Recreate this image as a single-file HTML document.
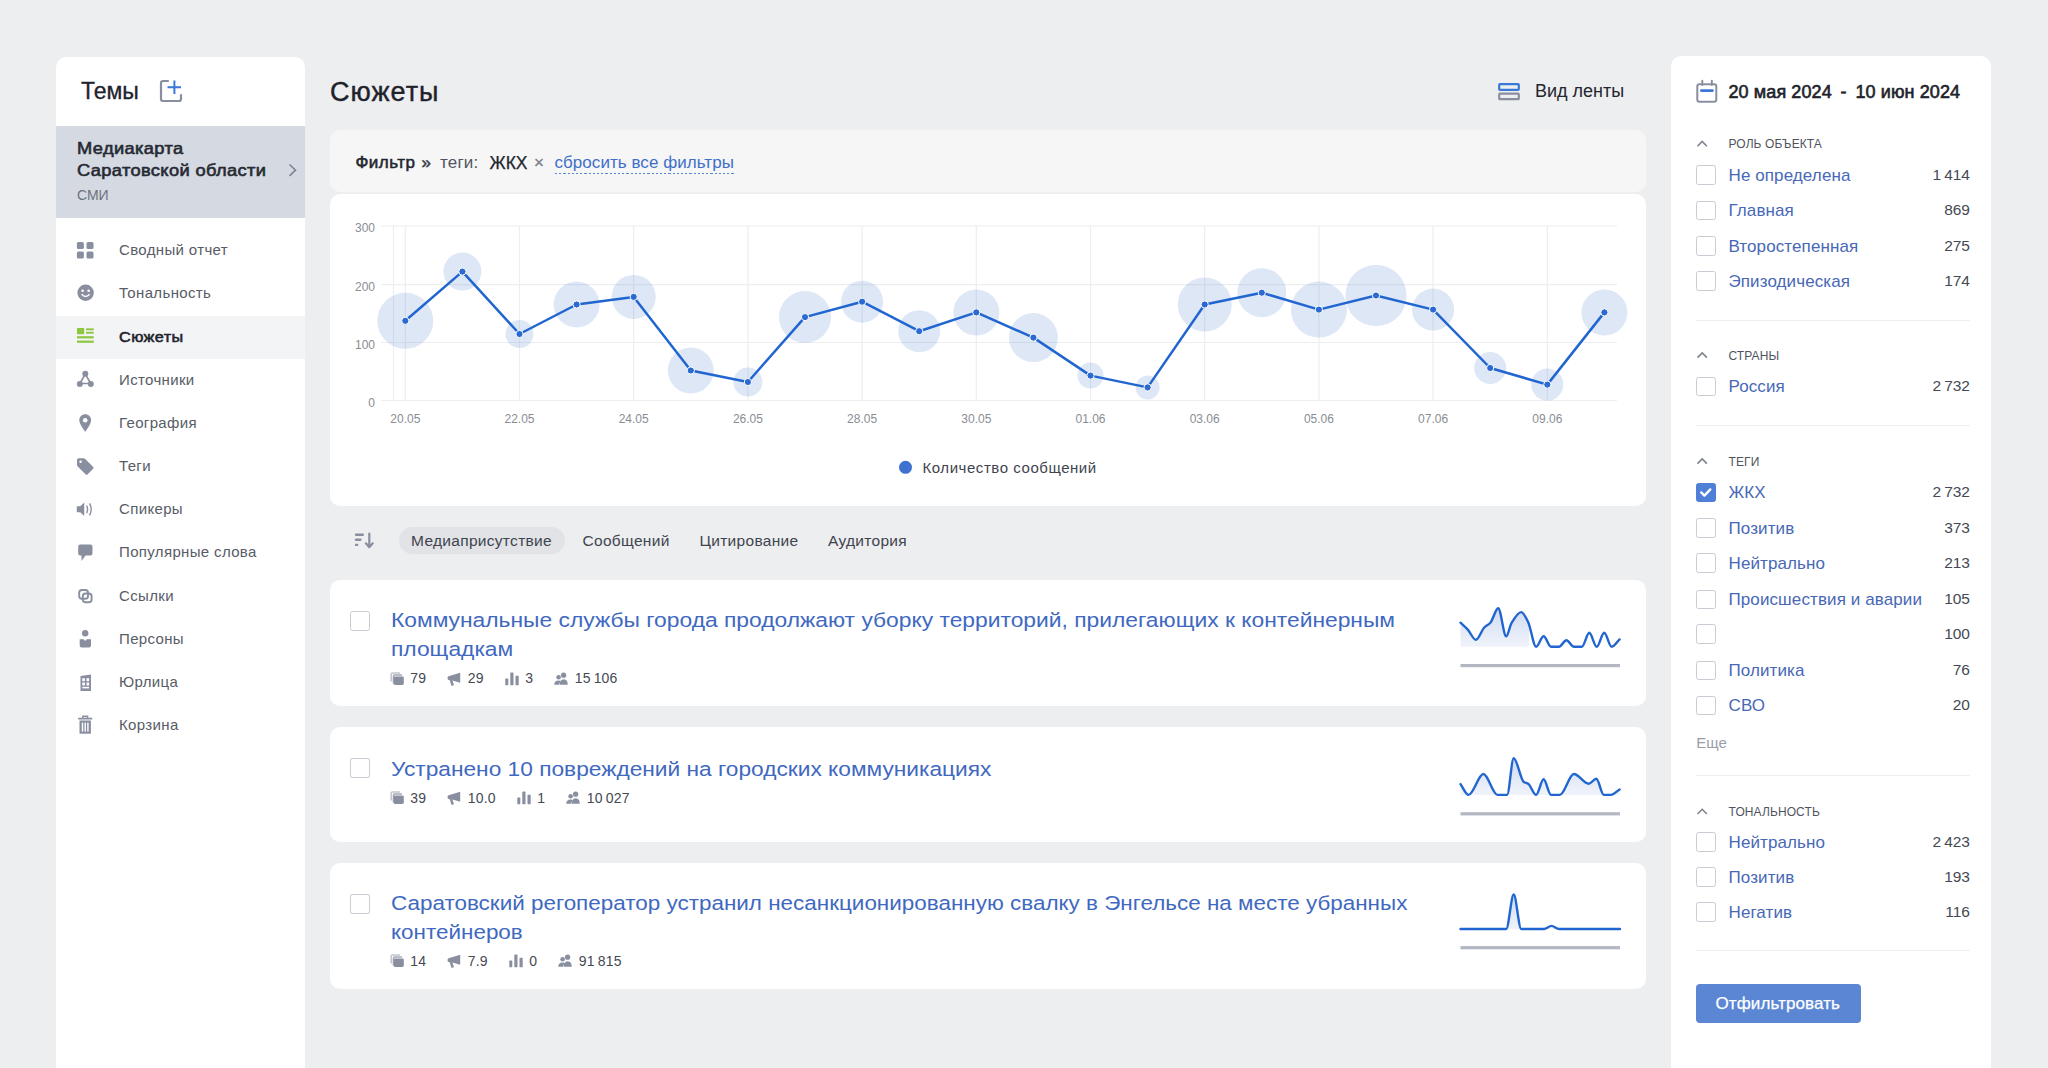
<!DOCTYPE html>
<html><head><meta charset="utf-8">
<style>
*{box-sizing:border-box;margin:0;padding:0}
html,body{width:2048px;height:1068px;overflow:hidden;background:#EDEEF0;font-family:"Liberation Sans",sans-serif;color:#23262E}
.a{position:absolute;white-space:nowrap;line-height:1}
.panel{position:absolute;background:#fff}
.yl{left:335px;width:40px;text-align:right;font-size:12px;color:#8A8D94}
.xl{top:413px;width:60px;text-align:center;font-size:12px;color:#8A8D94}
.tab{top:532.9px;font-size:15.5px;color:#40444E;letter-spacing:0.3px}
.cb{width:19.5px;height:19.5px;border:1.8px solid #C9CCD3;border-radius:2.5px;background:#fff}
.ct{font-size:20.5px;line-height:29px;color:#3F69C0;letter-spacing:0px;transform-origin:0 0;transform:scaleX(1.113)}
.met{font-size:14px;color:#454953;display:flex;align-items:center;height:14px;letter-spacing:0.2px}
.met .mic{flex:none;margin-right:6.5px;top:0.5px}
.met .mv{margin-right:21px;line-height:14px}
.sh{margin-top:1px;left:1728.5px;font-size:12px;color:#50545E;letter-spacing:0.1px}
.rl{left:1728.5px;font-size:17px;color:#4868B6;letter-spacing:0.1px}
.rc{right:78px;font-size:15.5px;color:#454953;text-align:right}
.cb.on{background:#4F7FD6;border-color:#4F7FD6}
.dt{top:82.8px;font-size:18px;color:#1E222B;letter-spacing:0.1px;-webkit-text-stroke:0.6px #1E222B}
.mi{left:119px;font-size:15px;color:#585C66;letter-spacing:0.35px}
.mi.sel{color:#1E222B;-webkit-text-stroke:0.55px #1E222B;letter-spacing:0.4px;transform-origin:0 0;transform:scaleX(1.08)}
.sg{left:77px;font-size:16.5px;color:#262A33;-webkit-text-stroke:0.6px #262A33;letter-spacing:0.35px;transform-origin:0 0;transform:scaleX(1.105)}
svg{position:absolute;overflow:visible}
</style></head><body>

<!-- LEFT SIDEBAR -->
<div class="panel" style="left:56px;top:57px;width:249px;height:1020px;border-radius:10px 10px 0 0"></div>
<div class="a" style="left:81px;top:80.2px;font-size:23px;color:#1E222B;-webkit-text-stroke:0.3px #1E222B">Темы</div>
<div class="a" id="sel" style="left:56px;top:126px;width:249px;height:92px;background:#D5D9E1;position:absolute"></div>
<div class="a sg" style="top:140px">Медиакарта</div>
<div class="a sg" style="top:162px">Саратовской области</div>
<div class="a" style="left:77px;top:188px;font-size:14px;color:#6C717C">СМИ</div>
<div class="a" style="left:56px;top:316px;width:249px;height:43px;background:#F3F4F6"></div>
<div class="a mi" style="top:242.1px">Сводный отчет</div>
<div class="a mi" style="top:285.3px">Тональность</div>
<div class="a mi sel" style="top:328.5px">Сюжеты</div>
<div class="a mi" style="top:371.6px">Источники</div>
<div class="a mi" style="top:414.8px">География</div>
<div class="a mi" style="top:458.0px">Теги</div>
<div class="a mi" style="top:501.2px">Спикеры</div>
<div class="a mi" style="top:544.4px">Популярные слова</div>
<div class="a mi" style="top:587.5px">Ссылки</div>
<div class="a mi" style="top:630.7px">Персоны</div>
<div class="a mi" style="top:673.9px">Юрлица</div>
<div class="a mi" style="top:717.1px">Корзина</div>
<svg style="left:0;top:0" width="2048" height="1068">
<g fill="#8A8FA0">
<!-- plus icon -->
<path d="M168 81 H163 Q161 81 161 83 V99 Q161 101 163 101 H179 Q181 101 181 99 V95" fill="none" stroke="#8A8FA0" stroke-width="2.2" stroke-linecap="round"/>
<path d="M174.4 80.5 V94 M167.5 87.2 H181" stroke="#3A78D8" stroke-width="2" fill="none"/>
<!-- chevron -->
<path d="M289.5 164.5 L295.5 170.2 L289.5 175.8" fill="none" stroke="#7E838F" stroke-width="1.6"/>
<!-- grid -->
<rect x="76.9" y="241.9" width="7" height="7" rx="1.5"/><rect x="86.5" y="241.9" width="7" height="7" rx="1.5"/>
<rect x="76.9" y="251.5" width="7" height="7" rx="1.5"/><rect x="86.5" y="251.5" width="7" height="7" rx="1.5"/>
<!-- smiley -->
<circle cx="85.6" cy="292.8" r="8.2"/>
<circle cx="82.6" cy="290.8" r="1.3" fill="#fff"/><circle cx="88.6" cy="290.8" r="1.3" fill="#fff"/>
<path d="M81.6 294.3 Q85.6 298.5 89.6 294.3" fill="none" stroke="#fff" stroke-width="1.5"/>
<!-- sources -->
<path d="M85.3 374 L79.8 383.5 L90.8 383.5 Z" fill="none" stroke="#8A8FA0" stroke-width="1.6"/>
<circle cx="85.3" cy="373.8" r="3"/><circle cx="79.8" cy="384" r="3"/><circle cx="90.8" cy="384" r="3"/>
<!-- pin -->
<path d="M85.2 414.3 C81.8 414.3 79.3 416.8 79.3 420.2 C79.3 424.2 85.2 431.7 85.2 431.7 C85.2 431.7 91.1 424.2 91.1 420.2 C91.1 416.8 88.6 414.3 85.2 414.3Z"/>
<circle cx="85.2" cy="420.2" r="2.3" fill="#fff"/>
<!-- tag -->
<path d="M77 460 V464.8 Q77 465.8 77.7 466.5 L85.5 474.2 Q86.6 475.3 87.7 474.2 L93 468.9 Q94.1 467.8 93 466.7 L85.2 458.9 Q84.5 458.2 83.5 458.2 H78.8 Q77 458.2 77 460Z"/>
<circle cx="80.6" cy="461.7" r="1.3" fill="#fff"/>
<!-- speaker -->
<path d="M76.8 506.3 H80.2 L84.2 502.6 V516 L80.2 512.3 H76.8Z"/>
<path d="M86.6 505.5 Q88.6 509.3 86.6 513.1 M89.6 503.3 Q92.8 509.3 89.6 515.3" fill="none" stroke="#8A8FA0" stroke-width="1.4"/>
<!-- chat -->
<path d="M80.2 544.4 H90.5 Q92.5 544.4 92.5 546.4 V553.6 Q92.5 555.6 90.5 555.6 H85.5 L81.5 561 V555.6 H80.2 Q78.2 555.6 78.2 553.6 V546.4 Q78.2 544.4 80.2 544.4Z"/>
<!-- links -->
<rect x="79.2" y="590" width="8.8" height="8.8" rx="2.8" fill="none" stroke="#8A8FA0" stroke-width="1.9"/>
<rect x="82.8" y="593.5" width="8.8" height="8.8" rx="2.8" fill="none" stroke="#8A8FA0" stroke-width="1.9"/>
<!-- person -->
<circle cx="85.2" cy="633.2" r="3.2"/>
<path d="M79.7 639.2 H83.7 L85.2 641 L86.7 639.2 H91 V645.5 Q91 647.6 89 647.6 H81.7 Q79.7 647.6 79.7 645.5Z"/>
<!-- building -->
<path d="M80.5 676 L91 674.5 V691 H80.5Z"/>
<rect x="82.3" y="678.2" width="2.6" height="3" fill="#fff"/><rect x="86.5" y="678.2" width="2.6" height="3" fill="#fff"/>
<rect x="82.3" y="682.5" width="2.6" height="3" fill="#fff"/><rect x="86.5" y="682.5" width="2.6" height="3" fill="#fff"/>
<rect x="82.3" y="686.8" width="6.8" height="1.6" fill="#fff"/>
<!-- trash -->
<path d="M78.2 718.6 H92.2" stroke="#8A8FA0" stroke-width="1.8"/>
<path d="M82.8 718 V716.2 H87.6 V718" fill="none" stroke="#8A8FA0" stroke-width="1.4"/>
<path d="M79.5 720.5 H90.9 V733.7 H79.5Z"/>
<rect x="81.8" y="722.6" width="1.4" height="9" fill="#fff"/><rect x="84.5" y="722.6" width="1.4" height="9" fill="#fff"/><rect x="87.2" y="722.6" width="1.4" height="9" fill="#fff"/>
</g>
<!-- stories green -->
<g fill="#8DC63F">
<rect x="77" y="328" width="7.2" height="6.2" rx="0.6"/>
<rect x="86" y="328.4" width="7.7" height="1.9"/><rect x="86" y="331.8" width="7.7" height="1.9"/>
<rect x="77" y="336.2" width="16.7" height="2.2"/><rect x="77" y="340.6" width="16.7" height="2.2"/>
</g>
</svg>


<!-- MAIN -->
<div class="a" style="left:330px;top:78.6px;font-size:27px;color:#1E222B;letter-spacing:1px;-webkit-text-stroke:0.4px #1E222B">Сюжеты</div>
<div class="a" style="left:1535px;top:82px;font-size:18px;color:#23262E">Вид ленты</div>

<div class="panel" style="left:330px;top:130px;width:1316px;height:62px;border-radius:10px;background:#F6F6F7"></div>
<div class="panel" style="left:330px;top:194px;width:1316px;height:312px;border-radius:10px"></div>

<div class="a" style="left:399px;top:527px;width:166px;height:27px;border-radius:14px;background:#E1E3E7"></div>


<!-- view icon -->
<svg style="left:0;top:0" width="2048" height="1068">
<rect x="1499.2" y="84.2" width="19.6" height="5.6" rx="0.8" fill="none" stroke="#3A78D8" stroke-width="2.2"/>
<rect x="1499.2" y="93.6" width="19.6" height="5.6" rx="0.8" fill="none" stroke="#8A8FA0" stroke-width="2.2"/>
<g stroke="#EDEEF1" stroke-width="1.2" fill="none">
<path d="M381 226 H1617"/>
<path d="M381 284.7 H1617"/>
<path d="M381 342.5 H1617"/>
<path d="M381 400.5 H1617"/>
<path d="M393.5 226 V400.5"/>
<path d="M405.3 226 V400.5"/>
<path d="M519.5 226 V400.5"/>
<path d="M633.7 226 V400.5"/>
<path d="M747.9 226 V400.5"/>
<path d="M862.1 226 V400.5"/>
<path d="M976.3 226 V400.5"/>
<path d="M1090.5 226 V400.5"/>
<path d="M1204.7 226 V400.5"/>
<path d="M1318.9 226 V400.5"/>
<path d="M1433.1 226 V400.5"/>
<path d="M1547.3 226 V400.5"/>
</g>
<g fill="#3C6FC8" fill-opacity="0.17">
<circle cx="405.3" cy="320.8" r="28"/>
<circle cx="462.4" cy="271.6" r="19"/>
<circle cx="519.5" cy="334" r="14"/>
<circle cx="576.6" cy="304.5" r="23"/>
<circle cx="633.7" cy="296.9" r="22"/>
<circle cx="690.8" cy="370.5" r="23"/>
<circle cx="747.9" cy="382" r="14.5"/>
<circle cx="805.0" cy="317.1" r="26"/>
<circle cx="862.1" cy="301.7" r="21"/>
<circle cx="919.2" cy="331.2" r="21"/>
<circle cx="976.3" cy="312.4" r="23"/>
<circle cx="1033.4" cy="337.6" r="24.5"/>
<circle cx="1090.5" cy="375.6" r="13"/>
<circle cx="1147.6" cy="387.4" r="12"/>
<circle cx="1204.7" cy="304.5" r="27"/>
<circle cx="1261.8" cy="292.7" r="24.5"/>
<circle cx="1318.9" cy="309.6" r="28"/>
<circle cx="1376.0" cy="295.5" r="30.6"/>
<circle cx="1433.1" cy="309.6" r="21"/>
<circle cx="1490.2" cy="368" r="16"/>
<circle cx="1547.3" cy="384.6" r="16"/>
<circle cx="1604.4" cy="312.4" r="23"/>
</g>
<path d="M405.3 320.8 L462.4 271.6 L519.5 334 L576.6 304.5 L633.7 296.9 L690.8 370.5 L747.9 382 L805.0 317.1 L862.1 301.7 L919.2 331.2 L976.3 312.4 L1033.4 337.6 L1090.5 375.6 L1147.6 387.4 L1204.7 304.5 L1261.8 292.7 L1318.9 309.6 L1376.0 295.5 L1433.1 309.6 L1490.2 368 L1547.3 384.6 L1604.4 312.4" fill="none" stroke="#2166D0" stroke-width="2.5" stroke-linejoin="round"/>
<g fill="#2A6AD2" stroke="#fff" stroke-width="1">
<circle cx="405.3" cy="320.8" r="3.6"/>
<circle cx="462.4" cy="271.6" r="3.6"/>
<circle cx="519.5" cy="334" r="3.6"/>
<circle cx="576.6" cy="304.5" r="3.6"/>
<circle cx="633.7" cy="296.9" r="3.6"/>
<circle cx="690.8" cy="370.5" r="3.6"/>
<circle cx="747.9" cy="382" r="3.6"/>
<circle cx="805.0" cy="317.1" r="3.6"/>
<circle cx="862.1" cy="301.7" r="3.6"/>
<circle cx="919.2" cy="331.2" r="3.6"/>
<circle cx="976.3" cy="312.4" r="3.6"/>
<circle cx="1033.4" cy="337.6" r="3.6"/>
<circle cx="1090.5" cy="375.6" r="3.6"/>
<circle cx="1147.6" cy="387.4" r="3.6"/>
<circle cx="1204.7" cy="304.5" r="3.6"/>
<circle cx="1261.8" cy="292.7" r="3.6"/>
<circle cx="1318.9" cy="309.6" r="3.6"/>
<circle cx="1376.0" cy="295.5" r="3.6"/>
<circle cx="1433.1" cy="309.6" r="3.6"/>
<circle cx="1490.2" cy="368" r="3.6"/>
<circle cx="1547.3" cy="384.6" r="3.6"/>
<circle cx="1604.4" cy="312.4" r="3.6"/>
</g>
<circle cx="905.5" cy="467.3" r="6.5" fill="#3F72D0"/>
<!-- sort icon -->
<g fill="#8A8FA0">
<rect x="354.8" y="533.6" width="9.2" height="2.3" rx="1.1"/>
<rect x="354.8" y="538.6" width="6.8" height="2.3" rx="1.1"/>
<rect x="354.8" y="543.8" width="3.6" height="2.3" rx="1.1"/>
</g>
<path d="M369.3 533.5 V547 M365.9 543.3 L369.3 547.2 L372.7 543.3" fill="none" stroke="#8A8FA0" stroke-width="2.2" stroke-linecap="round" stroke-linejoin="round"/>
</svg>

<!-- filter bar -->
<div class="a" style="left:355.5px;top:153.6px;font-size:17px;color:#23262E;letter-spacing:0.45px;-webkit-text-stroke:0.55px #23262E">Фильтр</div>
<div class="a" style="left:421.5px;top:153.6px;font-size:17px;color:#3A3E48;-webkit-text-stroke:0.55px #3A3E48">»</div>
<div class="a" style="left:440px;top:153.6px;font-size:17px;color:#50545E;letter-spacing:0.2px">теги:</div>
<div class="a" style="left:489.5px;top:154.6px;font-size:17.5px;color:#23262E;-webkit-text-stroke:0.25px #23262E">ЖКХ</div>
<div class="a" style="left:534px;top:153.6px;font-size:17px;color:#7E828C;-webkit-text-stroke:0.4px #7E828C">×</div>
<div class="a" style="left:554.5px;top:153.6px;font-size:17px;color:#3F6FC8;letter-spacing:0.05px;padding-bottom:3.5px;background:repeating-linear-gradient(90deg,#5A86D6 0 2.2px,transparent 2.2px 4.2px) left bottom/100% 1.4px no-repeat;line-height:17px">сбросить все фильтры</div>

<!-- chart labels -->
<div class="a yl" style="top:222.4px">300</div>
<div class="a yl" style="top:281.1px">200</div>
<div class="a yl" style="top:338.9px">100</div>
<div class="a yl" style="top:396.9px">0</div>
<div class="a xl" style="left:375.3px">20.05</div>
<div class="a xl" style="left:489.5px">22.05</div>
<div class="a xl" style="left:603.7px">24.05</div>
<div class="a xl" style="left:717.9px">26.05</div>
<div class="a xl" style="left:832.1px">28.05</div>
<div class="a xl" style="left:946.3px">30.05</div>
<div class="a xl" style="left:1060.5px">01.06</div>
<div class="a xl" style="left:1174.7px">03.06</div>
<div class="a xl" style="left:1288.9px">05.06</div>
<div class="a xl" style="left:1403.1px">07.06</div>
<div class="a xl" style="left:1517.3px">09.06</div>
<div class="a" style="left:922.5px;top:459.8px;font-size:15px;color:#40444E;letter-spacing:0.55px">Количество сообщений</div>

<!-- sort tabs -->
<div class="a tab" style="left:411px">Медиаприсутствие</div>
<div class="a tab" style="left:582.5px">Сообщений</div>
<div class="a tab" style="left:699.5px">Цитирование</div>
<div class="a tab" style="left:828px">Аудитория</div>

<div class="panel" style="left:330px;top:580px;width:1316px;height:126px;border-radius:10px"></div>
<div class="panel" style="left:330px;top:727px;width:1316px;height:115px;border-radius:10px"></div>
<div class="panel" style="left:330px;top:863px;width:1316px;height:126px;border-radius:10px"></div>

<div class="a cb" style="left:350.2px;top:611.2px"></div>
<div class="a ct" style="left:390.5px;top:605.3px">Коммунальные службы города продолжают уборку территорий, прилегающих к контейнерным<br>площадкам</div>
<div class="a met" style="left:389.7px;top:671.2px"><svg class="mic" width="14" height="14" viewBox="0 0 14 14" style="position:relative"><path d="M1.2 9.5 V2.2 Q1.2 1 2.4 1 H10" fill="none" stroke="#C3C6CF" stroke-width="1.6"/><path d="M3.4 11.5 V4.2 Q3.4 3 4.6 3 H12" fill="none" stroke="#A4A8B3" stroke-width="1.4"/><rect x="3.6" y="4.4" width="10.2" height="8.6" rx="1.4" fill="#8A8FA0"/></svg><span class="mv">79</span><svg class="mic" width="14" height="14" viewBox="0 0 14 14" style="position:relative"><path d="M13.2 0.8 V10.8 L5.4 8.4 L6.8 12.6 Q7 13.4 6.2 13.6 L5.2 13.8 Q4.5 13.9 4.2 13.2 L2.8 8.2 L1.6 8 Q0.6 7.8 0.6 6.8 V5.4 Q0.6 4.4 1.6 4.2 Z" fill="#8A8FA0"/></svg><span class="mv">29</span><svg class="mic" width="14" height="14" viewBox="0 0 14 14" style="position:relative"><rect x="0.3" y="6.6" width="3" height="6.6" rx="0.6" fill="#8A8FA0"/><rect x="5.3" y="0.4" width="3.2" height="12.8" rx="0.6" fill="#8A8FA0"/><rect x="10.5" y="3.8" width="3.2" height="9.4" rx="0.6" fill="#8A8FA0"/></svg><span class="mv">3</span><svg class="mic" width="14" height="14" viewBox="0 0 14 14" style="position:relative"><circle cx="9.6" cy="3.2" r="2.6" fill="#8A8FA0"/><circle cx="4.6" cy="5.2" r="2.3" fill="#8A8FA0"/><path d="M5.8 12.8 Q5.8 7.4 9.6 7.2 Q13.8 7.4 13.8 12.8Z" fill="#8A8FA0"/><path d="M0.2 12.8 Q0.2 8.6 4.6 8.4 Q6.4 8.5 7 9.2 Q5.2 10.8 5.2 12.8Z" fill="#8A8FA0"/></svg><span class="mv">15&#8201;106</span></div>
<div class="a cb" style="left:350.2px;top:758.2px"></div>
<div class="a ct" style="left:390.5px;top:753.6px;transform:scaleX(1.108)">Устранено 10 повреждений на городских коммуникациях</div>
<div class="a met" style="left:389.7px;top:790.6px"><svg class="mic" width="14" height="14" viewBox="0 0 14 14" style="position:relative"><path d="M1.2 9.5 V2.2 Q1.2 1 2.4 1 H10" fill="none" stroke="#C3C6CF" stroke-width="1.6"/><path d="M3.4 11.5 V4.2 Q3.4 3 4.6 3 H12" fill="none" stroke="#A4A8B3" stroke-width="1.4"/><rect x="3.6" y="4.4" width="10.2" height="8.6" rx="1.4" fill="#8A8FA0"/></svg><span class="mv">39</span><svg class="mic" width="14" height="14" viewBox="0 0 14 14" style="position:relative"><path d="M13.2 0.8 V10.8 L5.4 8.4 L6.8 12.6 Q7 13.4 6.2 13.6 L5.2 13.8 Q4.5 13.9 4.2 13.2 L2.8 8.2 L1.6 8 Q0.6 7.8 0.6 6.8 V5.4 Q0.6 4.4 1.6 4.2 Z" fill="#8A8FA0"/></svg><span class="mv">10.0</span><svg class="mic" width="14" height="14" viewBox="0 0 14 14" style="position:relative"><rect x="0.3" y="6.6" width="3" height="6.6" rx="0.6" fill="#8A8FA0"/><rect x="5.3" y="0.4" width="3.2" height="12.8" rx="0.6" fill="#8A8FA0"/><rect x="10.5" y="3.8" width="3.2" height="9.4" rx="0.6" fill="#8A8FA0"/></svg><span class="mv">1</span><svg class="mic" width="14" height="14" viewBox="0 0 14 14" style="position:relative"><circle cx="9.6" cy="3.2" r="2.6" fill="#8A8FA0"/><circle cx="4.6" cy="5.2" r="2.3" fill="#8A8FA0"/><path d="M5.8 12.8 Q5.8 7.4 9.6 7.2 Q13.8 7.4 13.8 12.8Z" fill="#8A8FA0"/><path d="M0.2 12.8 Q0.2 8.6 4.6 8.4 Q6.4 8.5 7 9.2 Q5.2 10.8 5.2 12.8Z" fill="#8A8FA0"/></svg><span class="mv">10&#8201;027</span></div>
<div class="a cb" style="left:350.2px;top:894.2px"></div>
<div class="a ct" style="left:390.5px;top:887.6px;transform:scaleX(1.095)">Саратовский регоператор устранил несанкционированную свалку в Энгельсе на месте убранных<br>контейнеров</div>
<div class="a met" style="left:389.7px;top:953.5px"><svg class="mic" width="14" height="14" viewBox="0 0 14 14" style="position:relative"><path d="M1.2 9.5 V2.2 Q1.2 1 2.4 1 H10" fill="none" stroke="#C3C6CF" stroke-width="1.6"/><path d="M3.4 11.5 V4.2 Q3.4 3 4.6 3 H12" fill="none" stroke="#A4A8B3" stroke-width="1.4"/><rect x="3.6" y="4.4" width="10.2" height="8.6" rx="1.4" fill="#8A8FA0"/></svg><span class="mv">14</span><svg class="mic" width="14" height="14" viewBox="0 0 14 14" style="position:relative"><path d="M13.2 0.8 V10.8 L5.4 8.4 L6.8 12.6 Q7 13.4 6.2 13.6 L5.2 13.8 Q4.5 13.9 4.2 13.2 L2.8 8.2 L1.6 8 Q0.6 7.8 0.6 6.8 V5.4 Q0.6 4.4 1.6 4.2 Z" fill="#8A8FA0"/></svg><span class="mv">7.9</span><svg class="mic" width="14" height="14" viewBox="0 0 14 14" style="position:relative"><rect x="0.3" y="6.6" width="3" height="6.6" rx="0.6" fill="#8A8FA0"/><rect x="5.3" y="0.4" width="3.2" height="12.8" rx="0.6" fill="#8A8FA0"/><rect x="10.5" y="3.8" width="3.2" height="9.4" rx="0.6" fill="#8A8FA0"/></svg><span class="mv">0</span><svg class="mic" width="14" height="14" viewBox="0 0 14 14" style="position:relative"><circle cx="9.6" cy="3.2" r="2.6" fill="#8A8FA0"/><circle cx="4.6" cy="5.2" r="2.3" fill="#8A8FA0"/><path d="M5.8 12.8 Q5.8 7.4 9.6 7.2 Q13.8 7.4 13.8 12.8Z" fill="#8A8FA0"/><path d="M0.2 12.8 Q0.2 8.6 4.6 8.4 Q6.4 8.5 7 9.2 Q5.2 10.8 5.2 12.8Z" fill="#8A8FA0"/></svg><span class="mv">91&#8201;815</span></div>
<svg style="left:0;top:0" width="2048" height="1068"><defs><linearGradient id="sg" x1="0" y1="0" x2="0" y2="1"><stop offset="0" stop-color="#C9D5EF" stop-opacity="0.9"/><stop offset="1" stop-color="#E9EEF8" stop-opacity="0.7"/></linearGradient><clipPath id="c1"><rect x="1455" y="595" width="74" height="60"/></clipPath></defs>
<path d="M1460.5 622.7 C1462.9 624.9 1465.2 626.8 1467.6 629.3 C1470.4 632.3 1473.1 639.8 1475.9 639.8 C1478.7 639.8 1481.5 630.3 1484.3 627.5 C1486.3 625.5 1488.4 624.9 1490.4 622.7 C1493.0 619.9 1495.6 608.2 1498.2 608.2 C1500.9 608.2 1503.5 636.3 1506.2 636.3 C1508.0 636.3 1509.7 626.0 1511.5 623.1 C1514.7 617.9 1518.0 612.1 1521.2 612.1 C1523.5 612.1 1525.9 617.6 1528.2 622.2 C1530.8 627.4 1533.5 646.8 1536.1 646.8 C1538.6 646.8 1541.1 636.3 1543.6 636.3 C1546.1 636.3 1548.5 646.8 1551.0 646.8 C1553.7 646.8 1556.3 646.8 1559.0 646.8 C1561.5 646.8 1563.9 640.3 1566.4 640.3 C1568.9 640.3 1571.4 646.8 1573.9 646.8 C1576.5 646.8 1579.2 646.8 1581.8 646.8 C1584.3 646.8 1586.8 632.8 1589.3 632.8 C1591.8 632.8 1594.2 646.8 1596.7 646.8 C1599.2 646.8 1601.7 632.8 1604.2 632.8 C1606.7 632.8 1609.2 646.8 1611.7 646.8 C1614.3 646.8 1617.0 641.9 1619.6 639.4 L1619.6 646.8 L1460.5 646.8Z" fill="url(#sg)" clip-path="url(#c1)"/>
<path d="M1460.5 622.7 C1462.9 624.9 1465.2 626.8 1467.6 629.3 C1470.4 632.3 1473.1 639.8 1475.9 639.8 C1478.7 639.8 1481.5 630.3 1484.3 627.5 C1486.3 625.5 1488.4 624.9 1490.4 622.7 C1493.0 619.9 1495.6 608.2 1498.2 608.2 C1500.9 608.2 1503.5 636.3 1506.2 636.3 C1508.0 636.3 1509.7 626.0 1511.5 623.1 C1514.7 617.9 1518.0 612.1 1521.2 612.1 C1523.5 612.1 1525.9 617.6 1528.2 622.2 C1530.8 627.4 1533.5 646.8 1536.1 646.8 C1538.6 646.8 1541.1 636.3 1543.6 636.3 C1546.1 636.3 1548.5 646.8 1551.0 646.8 C1553.7 646.8 1556.3 646.8 1559.0 646.8 C1561.5 646.8 1563.9 640.3 1566.4 640.3 C1568.9 640.3 1571.4 646.8 1573.9 646.8 C1576.5 646.8 1579.2 646.8 1581.8 646.8 C1584.3 646.8 1586.8 632.8 1589.3 632.8 C1591.8 632.8 1594.2 646.8 1596.7 646.8 C1599.2 646.8 1601.7 632.8 1604.2 632.8 C1606.7 632.8 1609.2 646.8 1611.7 646.8 C1614.3 646.8 1617.0 641.9 1619.6 639.4" fill="none" stroke="#2166D0" stroke-width="2.4" stroke-linecap="round" stroke-linejoin="round"/>
<rect x="1460.5" y="664.0" width="159.5" height="3.2" fill="#B3B7C2"/>
<path d="M1460.5 784.1 C1463.2 787.7 1465.8 794.9 1468.5 794.9 C1473.5 794.9 1478.4 774.0 1483.4 774.0 C1488.1 774.0 1492.8 794.9 1497.5 794.9 C1500.7 794.9 1503.9 794.9 1507.1 794.9 C1509.3 794.9 1511.5 758.2 1513.7 758.2 C1517.1 758.2 1520.4 779.8 1523.8 781.9 C1525.3 782.8 1526.7 782.8 1528.2 783.7 C1530.8 785.3 1533.5 794.9 1536.1 794.9 C1538.6 794.9 1541.1 779.3 1543.6 779.3 C1546.1 779.3 1548.5 794.9 1551.0 794.9 C1553.9 794.9 1556.9 794.9 1559.8 794.9 C1564.5 794.9 1569.2 774.0 1573.9 774.0 C1578.9 774.0 1583.8 783.7 1588.8 783.7 C1591.3 783.7 1593.8 778.8 1596.3 778.8 C1598.8 778.8 1601.3 794.9 1603.8 794.9 C1606.1 794.9 1608.5 794.9 1610.8 794.9 C1613.7 794.9 1616.7 791.2 1619.6 789.4 L1619.6 794.9 L1460.5 794.9Z" fill="url(#sg)"/>
<path d="M1460.5 784.1 C1463.2 787.7 1465.8 794.9 1468.5 794.9 C1473.5 794.9 1478.4 774.0 1483.4 774.0 C1488.1 774.0 1492.8 794.9 1497.5 794.9 C1500.7 794.9 1503.9 794.9 1507.1 794.9 C1509.3 794.9 1511.5 758.2 1513.7 758.2 C1517.1 758.2 1520.4 779.8 1523.8 781.9 C1525.3 782.8 1526.7 782.8 1528.2 783.7 C1530.8 785.3 1533.5 794.9 1536.1 794.9 C1538.6 794.9 1541.1 779.3 1543.6 779.3 C1546.1 779.3 1548.5 794.9 1551.0 794.9 C1553.9 794.9 1556.9 794.9 1559.8 794.9 C1564.5 794.9 1569.2 774.0 1573.9 774.0 C1578.9 774.0 1583.8 783.7 1588.8 783.7 C1591.3 783.7 1593.8 778.8 1596.3 778.8 C1598.8 778.8 1601.3 794.9 1603.8 794.9 C1606.1 794.9 1608.5 794.9 1610.8 794.9 C1613.7 794.9 1616.7 791.2 1619.6 789.4" fill="none" stroke="#2166D0" stroke-width="2.4" stroke-linecap="round" stroke-linejoin="round"/>
<rect x="1460.5" y="812.2" width="159.5" height="3.2" fill="#B3B7C2"/>
<path d="M1460.5 929.0 C1475.7 929.0 1491.0 929.0 1506.2 929.0 C1508.7 929.0 1511.2 894.5 1513.7 894.5 C1516.2 894.5 1518.7 929.0 1521.2 929.0 C1528.8 929.0 1536.4 929.0 1544.0 929.0 C1546.5 929.0 1549.0 925.9 1551.5 925.9 C1554.0 925.9 1556.5 929.0 1559.0 929.0 C1579.3 929.0 1599.7 929.0 1620.0 929.0 L1620.0 929 L1460.5 929Z" fill="url(#sg)"/>
<path d="M1460.5 929.0 C1475.7 929.0 1491.0 929.0 1506.2 929.0 C1508.7 929.0 1511.2 894.5 1513.7 894.5 C1516.2 894.5 1518.7 929.0 1521.2 929.0 C1528.8 929.0 1536.4 929.0 1544.0 929.0 C1546.5 929.0 1549.0 925.9 1551.5 925.9 C1554.0 925.9 1556.5 929.0 1559.0 929.0 C1579.3 929.0 1599.7 929.0 1620.0 929.0" fill="none" stroke="#2166D0" stroke-width="2.4" stroke-linecap="round" stroke-linejoin="round"/>
<rect x="1460.5" y="946.1" width="159.5" height="3.2" fill="#B3B7C2"/>
</svg>
<!-- RIGHT PANEL -->
<div class="panel" style="left:1671px;top:56px;width:320px;height:1020px;border-radius:10px 10px 0 0"></div>

<div class="a dt" style="left:1728.5px">20 мая 2024</div>
<div class="a dt" style="left:1840.5px">-</div>
<div class="a dt" style="left:1855.5px">10 июн 2024</div>
<div class="a sh" style="top:137.4px">РОЛЬ ОБЪЕКТА</div>
<div class="a cb" style="left:1696.3px;top:165.2px"></div>
<div class="a rl" style="top:166.6px">Не определена</div>
<div class="a rc" style="top:166.7px">1&#8201;414</div>
<div class="a cb" style="left:1696.3px;top:200.8px"></div>
<div class="a rl" style="top:202.2px">Главная</div>
<div class="a rc" style="top:202.3px">869</div>
<div class="a cb" style="left:1696.3px;top:236.4px"></div>
<div class="a rl" style="top:237.8px">Второстепенная</div>
<div class="a rc" style="top:237.9px">275</div>
<div class="a cb" style="left:1696.3px;top:271.2px"></div>
<div class="a rl" style="top:272.6px">Эпизодическая</div>
<div class="a rc" style="top:272.7px">174</div>
<div class="a sh" style="top:348.8px">СТРАНЫ</div>
<div class="a cb" style="left:1696.3px;top:376.8px"></div>
<div class="a rl" style="top:378.2px">Россия</div>
<div class="a rc" style="top:378.3px">2&#8201;732</div>
<div class="a sh" style="top:454.8px">ТЕГИ</div>
<div class="a cb on" style="left:1696.3px;top:482.8px"></div>
<div class="a rl" style="top:484.2px">ЖКХ</div>
<div class="a rc" style="top:484.3px">2&#8201;732</div>
<div class="a cb" style="left:1696.3px;top:518.4px"></div>
<div class="a rl" style="top:519.8px">Позитив</div>
<div class="a rc" style="top:519.9px">373</div>
<div class="a cb" style="left:1696.3px;top:553.2px"></div>
<div class="a rl" style="top:554.6px">Нейтрально</div>
<div class="a rc" style="top:554.7px">213</div>
<div class="a cb" style="left:1696.3px;top:589.6px"></div>
<div class="a rl" style="top:591.0px">Происшествия и аварии</div>
<div class="a rc" style="top:591.1px">105</div>
<div class="a cb" style="left:1696.3px;top:624.4px"></div>
<div class="a rc" style="top:625.9px">100</div>
<div class="a cb" style="left:1696.3px;top:660.7px"></div>
<div class="a rl" style="top:662.1px">Политика</div>
<div class="a rc" style="top:662.2px">76</div>
<div class="a cb" style="left:1696.3px;top:695.6px"></div>
<div class="a rl" style="top:697.0px">СВО</div>
<div class="a rc" style="top:697.1px">20</div>
<div class="a sh" style="top:805.2px">ТОНАЛЬНОСТЬ</div>
<div class="a cb" style="left:1696.3px;top:832.4px"></div>
<div class="a rl" style="top:833.8px">Нейтрально</div>
<div class="a rc" style="top:833.9px">2&#8201;423</div>
<div class="a cb" style="left:1696.3px;top:867.4px"></div>
<div class="a rl" style="top:868.8px">Позитив</div>
<div class="a rc" style="top:868.9px">193</div>
<div class="a cb" style="left:1696.3px;top:902.4px"></div>
<div class="a rl" style="top:903.8px">Негатив</div>
<div class="a rc" style="top:903.9px">116</div>
<div class="a" style="left:1696px;top:319.5px;width:274px;height:1.2px;background:#EDEEF1"></div>
<div class="a" style="left:1696px;top:424.5px;width:274px;height:1.2px;background:#EDEEF1"></div>
<div class="a" style="left:1696px;top:774.7px;width:274px;height:1.2px;background:#EDEEF1"></div>
<div class="a" style="left:1696px;top:950.2px;width:274px;height:1.2px;background:#EDEEF1"></div>
<div class="a" style="left:1696.3px;top:735.3px;font-size:15px;color:#9A9EA8">Еще</div>
<div class="a" style="left:1696.3px;top:983.6px;width:165px;height:39.2px;border-radius:4px;background:#5A86D3"></div>
<div class="a" style="left:1715.5px;top:995.1px;font-size:17px;color:#fff;letter-spacing:0.1px;-webkit-text-stroke:0.25px #fff">Отфильтровать</div>
<svg style="left:0;top:0" width="2048" height="1068"><g fill="none" stroke="#8A8FA0" stroke-width="2">
<rect x="1697.3" y="84.2" width="19" height="17.6" rx="2"/>
<path d="M1702.3 80.8 V85 M1711.8 80.8 V85" stroke-linecap="round"/>
</g><path d="M1701.3 90.6 H1712.5" stroke="#3A78D8" stroke-width="2.6" stroke-linecap="round"/>
<path d="M1697.5 146.2 L1702.2 141.5 L1706.9 146.2" fill="none" stroke="#7E838F" stroke-width="1.6"/>
<path d="M1697.5 357.6 L1702.2 352.9 L1706.9 357.6" fill="none" stroke="#7E838F" stroke-width="1.6"/>
<path d="M1697.5 463.6 L1702.2 458.9 L1706.9 463.6" fill="none" stroke="#7E838F" stroke-width="1.6"/>
<path d="M1697.5 814.0 L1702.2 809.3 L1706.9 814.0" fill="none" stroke="#7E838F" stroke-width="1.6"/>
<path d="M1701.2 492.4 L1704.4 495.6 L1710.3 489.4" fill="none" stroke="#fff" stroke-width="2.3" stroke-linecap="round" stroke-linejoin="round"/>
</svg>
</body></html>
